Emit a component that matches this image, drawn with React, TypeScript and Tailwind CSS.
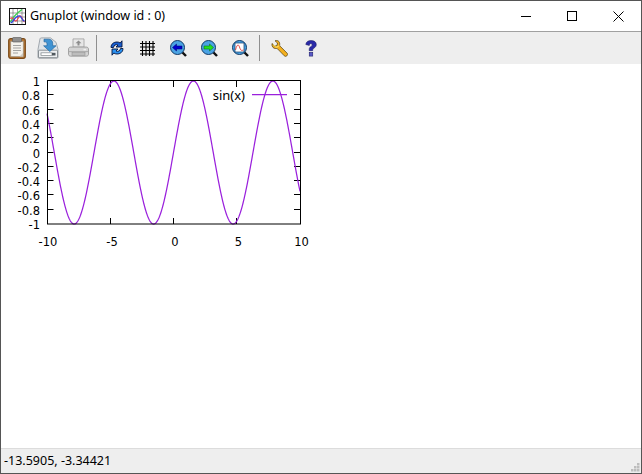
const FONT = "font-['Noto_Sans',sans-serif]";

const sinePoints = () => {
  const pts: string[] = [];
  for (let px = 47; px <= 300; px += 0.5) {
    const x = -10 + ((px - 47) / 253) * 20;
    const y = 152.5 - Math.sin(x) * 71.5;
    pts.push(`${px},${y.toFixed(2)}`);
  }
  return pts.join(" ");
};

const yLabels = ["1", "0.8", "0.6", "0.4", "0.2", "0", "-0.2", "-0.4", "-0.6", "-0.8", "-1"];
const xLabels = [
  { x: 48, tick: 0, t: "-10" },
  { x: 112, tick: 110.5, t: "-5" },
  { x: 175, tick: 173.5, t: "0" },
  { x: 238.5, tick: 236.5, t: "5" },
  { x: 301.5, tick: 0, t: "10" },
];

function Plot() {
  return (
    <svg className="block w-[320px] h-[190px]" viewBox="1 64 320 190" fontFamily="'DejaVu Sans', sans-serif" fontSize="11.5" fill="#000">
      {yLabels.map((t, i) => {
        const y = Math.round(81 + i * 14.3) - 0.5;
        return (
          <g key={t}>
            <text x="40" y={y + 5} textAnchor="end">{t}</text>
            {i > 0 && i < 10 && <path d={`M47.5 ${y}h6M300 ${y}h-6`} stroke="#000" strokeWidth="1" />}
          </g>
        );
      })}
      {xLabels.map((l) => (
        <g key={l.t}>
          <text x={l.x} y="245.5" textAnchor="middle">{l.t}</text>
          {l.tick > 0 && <path d={`M${l.tick} 81v6M${l.tick} 224v-6`} stroke="#000" strokeWidth="1" />}
        </g>
      ))}
      <polyline points={sinePoints()} fill="none" stroke="#9a20dc" strokeWidth="1.25" />
      <rect x="47.5" y="80.5" width="253" height="143.5" fill="none" stroke="#000" strokeWidth="1" />
      <text x="245" y="100" textAnchor="end" fontFamily="'Noto Sans', sans-serif" fontSize="13">sin(x)</text>
      <path d="M252 94.5h35" stroke="#9a20dc" strokeWidth="1.25" />
    </svg>
  );
}

function AppIcon() {
  return (
    <svg width="17" height="17" viewBox="0 0 17 17">
      <rect x="0.5" y="0.5" width="16" height="16" fill="#fff" stroke="#111" />
      <path d="M4 1v15M8.5 1v15M13 1v15M1 5h15M1 9h15M1 13h15" stroke="#444" strokeWidth="0.5" />
      <path d="M1.5 14C4 9 8 5 13 1.5" stroke="#3ccf4e" strokeWidth="1.5" fill="none" />
      <path d="M1.5 11c2-3 3 1 5 2s3-6 5-5 2 5 4 6" stroke="#f04050" strokeWidth="1.2" fill="none" />
      <path d="M1.5 15c3-1 3-4 6-6s4-1 5 1 2 3 3 3" stroke="#3048e0" strokeWidth="1.3" fill="none" />
    </svg>
  );
}

function Clipboard() {
  return (
    <svg width="18" height="22" viewBox="0 0 18 22">
      <rect x="0.7" y="1.7" width="16.6" height="19.6" rx="2" fill="#b87a3a" stroke="#7a4a18" strokeWidth="1.2" />
      <rect x="2.800" y="4.500" width="12.400" height="15" fill="#f4f2ec" stroke="#9a948a" strokeWidth="0.6" />
      <path d="M5 8.500h8M5 11h8M5 13.500h8M5 16h5" stroke="#9a9a9a" strokeWidth="0.9" />
      <path d="M11.500 19.500l3.500-3.500v3.500z" fill="#cfcabf" />
      <rect x="4.500" y="0.500" width="9" height="4.500" rx="1" fill="#8f8f8f" stroke="#555" strokeWidth="0.6" />
    </svg>
  );
}

function SaveIcon() {
  return (
    <svg width="22" height="22" viewBox="0 0 22 25" preserveAspectRatio="none">
      <path d="M1 14l2-12c.2-.8.7-1 1.500-1h9L19 6l2 8v9a1 1 0 0 1-1 1H2a1 1 0 0 1-1-1z" fill="#dfe4e8" stroke="#8a9299" strokeWidth="0.8" />
      <rect x="1.500" y="15" width="19" height="8.500" rx="0.8" fill="#eef0f2" stroke="#6d747a" strokeWidth="0.8" />
      <rect x="4" y="18" width="11" height="3" fill="#fff" stroke="#70787e" strokeWidth="0.7" />
      <rect x="15" y="18" width="3.500" height="3" fill="#4f575d" />
      <path d="M7 2.500h4.500c3 0 4.200 2 4.200 5V10H19l-6.200 6.500L6.600 10H10V8c0-2-.8-2.500-3-2.500z" fill="#3f93d3" stroke="#1f629c" strokeWidth="0.7" />
    </svg>
  );
}

function PrintIcon() {
  return (
    <svg width="21" height="20" viewBox="0 0 21 22" preserveAspectRatio="none">
      <path d="M5 1h11v9H5z" fill="#e7e7e7" stroke="#9c9c9c" strokeWidth="0.8" />
      <path d="M10.500 2.800l3 3h-2v2.500h-2V5.800h-2z" fill="#8d8d8d" />
      <path d="M2.500 10h16c1 0 2 1 2 2v6c0 1-1 2-2 2h-16c-1 0-2-1-2-2v-6c0-1 1-2 2-2z" fill="#d4d4d4" stroke="#8f8f8f" strokeWidth="0.8" />
      <path d="M1 15h19" stroke="#9a9a9a" strokeWidth="0.8" />
      <rect x="4" y="16" width="13" height="3.500" fill="#bdbdbd" stroke="#8a8a8a" strokeWidth="0.5" />
      <rect x="15.500" y="12" width="2.500" height="1.500" fill="#f0f0f0" />
    </svg>
  );
}

function RefreshIcon() {
  return (
    <svg width="14" height="16" viewBox="0 0 14 16">
      <path d="M1 7.500C1 3.800 4 2 7 2c1.300 0 2.300.3 3.200 1L12 .8V7H6l2-2c-2-.9-4.300.2-4.500 2.500z" fill="#1a5fd0" stroke="#06143c" strokeWidth="0.9" />
      <path d="M13 8.500C13 12.200 10 14 7 14c-1.300 0-2.300-.3-3.200-1L2 15.200V9h6l-2 2c2 .9 4.300-.2 4.500-2.500z" fill="#2a90f0" stroke="#06143c" strokeWidth="0.9" />
    </svg>
  );
}

function GridIcon() {
  return (
    <svg width="15" height="15" viewBox="0 0 15 15">
      <path d="M2.500 0v15M6 0v15M9.500 0v15M13 0v15M0 2.500h15M0 6h15M0 9.500h15M0 13h15" stroke="#000" strokeWidth="1.1" />
    </svg>
  );
}

function Magnifier({ children }: { children: React.ReactNode }) {
  return (
    <svg width="17" height="17" viewBox="0 0 17 17">
      <path d="M12 12l4 4" stroke="#111" strokeWidth="2.400" />
      <circle cx="7.500" cy="7.500" r="7" fill="#4aa3e4" stroke="#123a66" strokeWidth="1" />
      {children}
    </svg>
  );
}

function WrenchIcon() {
  return (
    <svg width="17" height="17" viewBox="0 0 17 17">
      <path d="M1 3.500L3.800 6.200 6 5.500 6.500 3 4 .8C6-.2 9 1 8.700 4.500c-.1.800-.1 1.200.3 1.600l7 7c1 1 .6 2-.2 2.700s-1.700.8-2.500 0L6.500 8.800c-.5-.4-1-.4-1.700-.3C2.500 8.800.4 6.500 1 3.500z" fill="#f4b01e" stroke="#4a3a10" strokeWidth="0.7" />
      <path d="M2.500 4.500c1 2 2.500 3 4 2.500L8 5.500" fill="none" stroke="#fdf07a" strokeWidth="1" />
    </svg>
  );
}

function HelpIcon() {
  return (
    <svg width="12" height="17" viewBox="0 0 12 17">
      <path d="M.8 4.500C1 1.800 3.200.5 6 .5c3.200 0 5.300 1.600 5.300 4 0 2-1.200 2.900-2.400 3.700-.8.500-1.200.9-1.200 1.800v.7H4.200V9.500c0-1.500.7-2.300 1.700-3 .8-.5 1.300-.9 1.300-1.600 0-.8-.5-1.200-1.300-1.200-1 0-1.500.6-1.600 1.800z" fill="#2a2aa8" stroke="#14145c" strokeWidth="0.5" />
      <rect x="4.200" y="12.300" width="3.600" height="3.800" fill="#5a5ac8" stroke="#14145c" strokeWidth="0.5" />
    </svg>
  );
}

function ToolBtn({ children }: { children: React.ReactNode }) {
  return <button className="flex h-[31px] w-[31px] shrink-0 items-center justify-center">{children}</button>;
}

export default function App() {
  return (
    <div className={`flex h-[474px] w-[642px] flex-col overflow-hidden border border-[#555] bg-white ${FONT}`}>
      {/* title bar */}
      <div className="flex h-[30px] shrink-0 items-center bg-white">
        <div className="ml-2 mr-1 flex items-center"><AppIcon /></div>
        <span className="text-[12.5px] text-black">Gnuplot (window id : 0)</span>
        <div className="ml-auto flex h-full">
          <div className="flex w-[46px] items-center justify-center">
            <div className="h-px w-[10px] bg-black" />
          </div>
          <div className="flex w-[46px] items-center justify-center">
            <div className="h-[10px] w-[10px] border border-black" />
          </div>
          <div className="flex w-[46px] items-center justify-center">
            <svg width="11" height="11" viewBox="0 0 11 11"><path d="M.5.500l10 10M10.500.500l-10 10" stroke="#000" strokeWidth="1" /></svg>
          </div>
        </div>
      </div>

      {/* toolbar */}
      <div className="flex h-[33px] shrink-0 items-center border-t border-[#a0a0a0] bg-[#eeeeee]">
        <ToolBtn><Clipboard /></ToolBtn>
        <ToolBtn><SaveIcon /></ToolBtn>
        <ToolBtn><PrintIcon /></ToolBtn>
        <div className="ml-[2px] mr-[4px] h-[26px] w-px bg-[#8f8f8f]" />
        <ToolBtn><RefreshIcon /></ToolBtn>
        <ToolBtn><GridIcon /></ToolBtn>
        <ToolBtn>
          <Magnifier><path d="M2.500 7.500l4-3.500v2h5.500v3H6.500v2z" fill="#0000d0" stroke="#00006a" strokeWidth="0.5" /></Magnifier>
        </ToolBtn>
        <ToolBtn>
          <Magnifier><path d="M12.500 7.500l-4-3.500v2H3v3h5.500v2z" fill="#22e022" stroke="#0a6a0a" strokeWidth="0.5" /></Magnifier>
        </ToolBtn>
        <ToolBtn>
          <Magnifier>
            <rect x="3" y="3" width="9" height="9" fill="#fff" stroke="#123a66" strokeWidth="0.7" />
            <path d="M3.500 10c1.500-6 3-6 4-3s1.500 4 4 3" fill="none" stroke="#e02020" strokeWidth="0.8" />
          </Magnifier>
        </ToolBtn>
        <div className="ml-[3px] mr-[4px] h-[26px] w-px bg-[#8f8f8f]" />
        <ToolBtn><WrenchIcon /></ToolBtn>
        <ToolBtn><HelpIcon /></ToolBtn>
      </div>

      {/* plot canvas */}
      <div className="min-h-0 flex-1 bg-white">
        <Plot />
      </div>

      {/* status bar */}
      <div className="relative flex h-[25px] shrink-0 items-center border-t border-[#dcdcdc] bg-[#eeeeee] pl-[3px]">
        <span className="text-[12.5px] text-black">-13.5905, -3.34421</span>
        <svg className="absolute bottom-[1px] right-[1px]" width="9" height="9" viewBox="0 0 9 9" fill="#bdbdbd">
          <rect x="6" y="0" width="2.500" height="2.500" />
          <rect x="3" y="3" width="2.500" height="2.500" />
          <rect x="6" y="3" width="2.500" height="2.500" />
          <rect x="0" y="6" width="2.500" height="2.500" />
          <rect x="3" y="6" width="2.500" height="2.500" />
          <rect x="6" y="6" width="2.500" height="2.500" />
        </svg>
      </div>
    </div>
  );
}
